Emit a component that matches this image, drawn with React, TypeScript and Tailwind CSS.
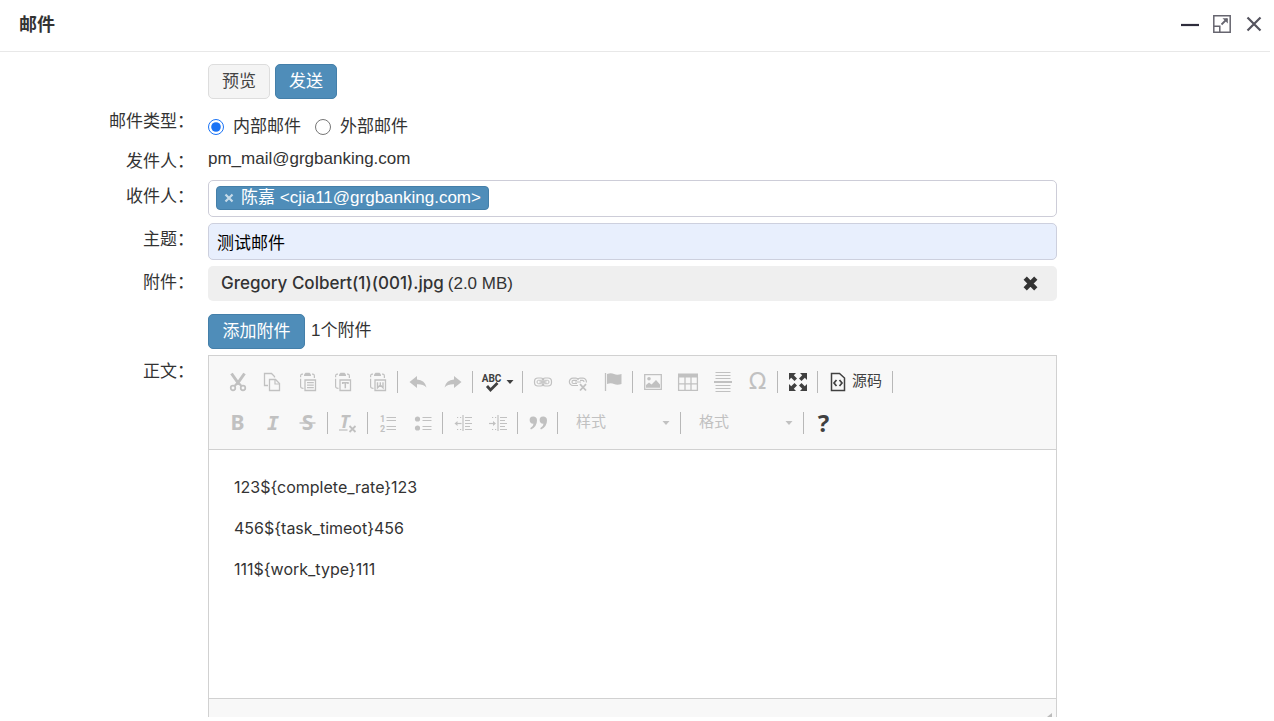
import { useState } from "react";
import type { ReactNode } from "react";

const Svg = ({ children, size = 20 }: { children: ReactNode; size?: number }) => (
  <svg
    width={size}
    height={size}
    viewBox="0 0 20 20"
    fill="none"
    stroke="currentColor"
    strokeWidth="1.5"
    className="overflow-visible"
    aria-hidden="true"
  >
    {children}
  </svg>
);

const Clipboard = ({ children }: { children: ReactNode }) => (
  <Svg>
    <path d="M5 2.2H4Q2.6 2.4 2.6 4V5.2M2.6 6.8V14.5Q2.6 16.3 5.5 16.3M14 2.2H15Q16.4 2.4 16.4 4V6" strokeWidth="1.2" />
    <path d="M6 4V2.5L7.5 0.8H11.5L13 2.5V4Z" fill="currentColor" stroke="none" />
    <path d="M7 8H17.5V18.5H7Z" strokeWidth="1.3" />
    {children}
  </Svg>
);

const CutIcon = () => (
  <Svg>
    <path d="M3.5 1.5L11.2 12.5M16.5 1.5L8.8 12.5" strokeWidth="3" />
    <circle cx="5" cy="16" r="2.3" strokeWidth="1.7" />
    <circle cx="15" cy="16" r="2.3" strokeWidth="1.7" />
    <path d="M6.5 14L10 10.5L13.5 14" strokeWidth="2.2" />
  </Svg>
);

const CopyIcon = () => (
  <Svg>
    <path d="M5 13.5H1.5V1.5H8.5L11.5 4.5V5.5" strokeWidth="1.3" />
    <path d="M6.5 7.5H12.5L16.5 11.5V18.5H6.5Z" strokeWidth="1.3" />
    <path d="M12 7.5V12H16.5" strokeWidth="1.2" />
  </Svg>
);

const PasteIcon = () => (
  <Clipboard>
    <path d="M9 10.7H15.8M9 13.2H15.8M9 15.7H15.8" strokeWidth="1.2" />
  </Clipboard>
);

const PasteTextIcon = () => (
  <Clipboard>
    <path d="M9.7 12V10.8H15V12M12.3 10.8V16.3" strokeWidth="1.5" />
  </Clipboard>
);

const PasteWordIcon = () => (
  <Clipboard>
    <path d="M9.5 10.2V15.8L12.3 13L15 15.8V10.2M12.3 10.2V13.5" strokeWidth="1.4" />
  </Clipboard>
);

const UndoIcon = () => (
  <Svg>
    <path d="M1.5 10L9 4V7.5Q17 8 18.5 15.5Q15 12 9 12.3V16Z" fill="currentColor" stroke="none" />
  </Svg>
);

const RedoIcon = () => (
  <Svg>
    <path d="M18.5 10L11 4V7.5Q3 8 1.5 15.5Q5 12 11 12.3V16Z" fill="currentColor" stroke="none" />
  </Svg>
);

const LinkIcon = () => (
  <Svg>
    <rect x="1.5" y="6" width="9.5" height="8" rx="3.5" strokeWidth="1.2" />
    <rect x="9" y="6" width="9.5" height="8" rx="3.5" strokeWidth="1.2" />
    <path d="M8.5 8.3H5.5Q4 8.3 4 10Q4 11.7 5.5 11.7H8.5M11.5 8.3H14.5Q16 8.3 16 10Q16 11.7 14.5 11.7H11.5" strokeWidth="1" />
    <path d="M6.5 10H13.5" strokeWidth="1.3" />
  </Svg>
);

const UnlinkIcon = () => (
  <Svg>
    <path d="M10 13.5H5A3.6 3.6 0 0 1 5 6.2H8Q10 6.2 10.3 8.2M9.7 8.2Q10 6.2 12 6.2H15A3.4 3.4 0 0 1 18.3 10.5M9 8.3H5.5Q4 8.3 4 10Q4 11.5 5.5 11.5H9M12 8.3H14.5Q16 8.3 16 10M7 10H13" strokeWidth="1.2" />
    <path d="M12 12.2L18 18.5M18 12.2L12 18.5" strokeWidth="1.8" />
  </Svg>
);

const FlagIcon = () => (
  <Svg>
    <path d="M2.5 1V19" strokeWidth="1.3" />
    <path d="M4 2Q8 0.5 11 2Q14 3.3 18.5 2V12Q14 13.5 11 12Q8 10.5 4 12Z" fill="currentColor" stroke="none" />
  </Svg>
);

const ImageIcon = () => (
  <Svg>
    <path d="M1.7 2.7H18.3V17.3H1.7Z" strokeWidth="1.3" />
    <circle cx="6" cy="6.8" r="1.8" fill="currentColor" stroke="none" />
    <path d="M3 15.8V13L6 10.5L8.5 12.5L13 8L17 12.5V15.8Z" fill="currentColor" stroke="none" />
  </Svg>
);

const TableIcon = () => (
  <Svg>
    <path d="M0 1.5H20V5.5H0Z" fill="currentColor" stroke="none" />
    <path d="M0.6 5V18.4H19.4V5M0 11.9H20M7 5V18M13 5V18" strokeWidth="1.3" />
  </Svg>
);

const RuleIcon = () => (
  <Svg>
    <path d="M2.5 0.5H17.5M2.5 3.5H17.5M2.5 6.5H17.5M2.5 13.5H17.5M2.5 16.5H17.5M2.5 19.5H17.5" strokeWidth="1" />
    <path d="M1 10H19" strokeWidth="2" />
  </Svg>
);

const MaximizeIcon = () => (
  <Svg>
    <path
      d="M1 1H8L5.8 3.2L9 6.5L6.5 9L3.2 5.8L1 8ZM19 1V8L16.8 5.8L13.5 9L11 6.5L14.2 3.2L12 1ZM1 19V12L3.2 14.2L6.5 11L9 13.5L5.8 16.8L8 19ZM19 19H12L14.2 16.8L11 13.5L13.5 11L16.8 14.2L19 12Z"
      fill="currentColor"
      stroke="none"
    />
  </Svg>
);

const SourceIcon = () => (
  <Svg>
    <path d="M3.5 1.5H11.5L16.5 6V18.5H3.5Z" strokeWidth="1.5" />
    <path d="M8.5 8L6 11L8.5 14M11.5 8L14 11L11.5 14" strokeWidth="1.7" />
  </Svg>
);

const BoldIcon = () => (
  <Svg>
    <text x="9.5" y="17" textAnchor="middle" fontSize="21" fontWeight="700" fontFamily="Noto Sans, sans-serif" fill="currentColor" stroke="none">
      B
    </text>
  </Svg>
);

const ItalicIcon = () => (
  <Svg>
    <text x="10" y="17" textAnchor="middle" fontSize="20" fontWeight="700" fontStyle="italic" fontFamily="DejaVu Sans Mono, monospace" fill="currentColor" stroke="none">
      I
    </text>
  </Svg>
);

const StrikeIcon = () => (
  <Svg>
    <text x="9.5" y="17" textAnchor="middle" fontSize="21" fontWeight="700" fontFamily="Noto Sans, sans-serif" fill="currentColor" stroke="none">
      S
    </text>
    <path d="M1.5 10H17.5" strokeWidth="1.4" />
  </Svg>
);

const ClearFormatIcon = () => (
  <Svg>
    <text x="2" y="15" fontSize="18" fontWeight="700" fontStyle="italic" fontFamily="Noto Sans, sans-serif" fill="currentColor" stroke="none">
      T
    </text>
    <path d="M1 17H9.5" strokeWidth="1.3" />
    <path d="M11.5 13L17.5 19M17.5 13L11.5 19" strokeWidth="1.8" />
  </Svg>
);

const NumberListIcon = () => (
  <Svg>
    <text x="2" y="8.5" fontSize="9" fontWeight="700" fontFamily="Roboto, sans-serif" fill="currentColor" stroke="none">
      1
    </text>
    <text x="2" y="18.5" fontSize="9" fontWeight="700" fontFamily="Roboto, sans-serif" fill="currentColor" stroke="none">
      2
    </text>
    <path d="M8.5 4.5H18M8.5 7.5H18M8.5 13.5H18M8.5 16.5H18" strokeWidth="1.1" />
  </Svg>
);

const BulletListIcon = () => (
  <Svg>
    <circle cx="4.5" cy="6" r="2.6" fill="currentColor" stroke="none" />
    <circle cx="4.5" cy="15" r="2.6" fill="currentColor" stroke="none" />
    <path d="M9.5 4.5H18.5M9.5 7.5H18.5M9.5 13.5H18.5M9.5 16.5H18.5" strokeWidth="1.1" />
  </Svg>
);

const IndentLines = () => (
  <>
    <path d="M10 2V18" strokeWidth="1.2" />
    <path d="M12 4.5H19M12 7.5H17M12 10.5H19M12 13.5H17M12 16.5H19" strokeWidth="1.1" />
    <path d="M4 4.5H5.2M7 4.5H8.2M4 16.5H5.2M7 16.5H8.2" strokeWidth="1.1" />
  </>
);

const OutdentIcon = () => (
  <Svg>
    <IndentLines />
    <path d="M3 10.5H8.5" strokeWidth="1.2" />
    <path d="M1.5 10.5L4.5 8V13Z" fill="currentColor" stroke="none" />
  </Svg>
);

const IndentIcon = () => (
  <Svg>
    <IndentLines />
    <path d="M1 10.5H5.5" strokeWidth="1.2" />
    <path d="M8 10.5L5 8V13Z" fill="currentColor" stroke="none" />
  </Svg>
);

const QuoteIcon = () => (
  <Svg>
    <path
      d="M5 3.5A3.7 3.7 0 0 1 9 7.5Q9 13.5 3 16.5L2.2 15.3Q5.5 13 5.5 10.7A3.6 3.6 0 1 1 5 3.5ZM15 3.5A3.7 3.7 0 0 1 19 7.5Q19 13.5 13 16.5L12.2 15.3Q15.5 13 15.5 10.7A3.6 3.6 0 1 1 15 3.5Z"
      fill="currentColor"
      stroke="none"
    />
  </Svg>
);

const SpellIcon = () => (
  <Svg>
    <text x="9.5" y="10" textAnchor="middle" fontSize="10" fontWeight="700" fontFamily="Roboto, sans-serif" fill="currentColor" stroke="none">
      ABC
    </text>
    <path d="M5 14L8.5 18L15.5 11" strokeWidth="2.8" />
  </Svg>
);

const Caret = () => (
  <svg width="8" height="4" viewBox="0 0 8 4" fill="currentColor" aria-hidden="true">
    <path d="M0.5 0H7.5L4 4Z" />
  </svg>
);

const Tool = ({ label, dark, children }: { label: string; dark?: boolean; children: ReactNode }) => (
  <button
    type="button"
    aria-label={label}
    title={label}
    className={`flex h-[41px] w-[35px] items-center justify-center ${dark ? "text-[#404040]" : "text-[#c1c1c1]"}`}
  >
    {children}
  </button>
);

const Separator = () => <span className="mx-[2px] h-[22px] w-px bg-[#b8b8b8]" />;

const ToolSelect = ({ label }: { label: string }) => (
  <div className="relative flex w-[118px] items-center text-[#c1c1c1]">
    <select
      aria-label={label}
      className="h-8 w-full appearance-none bg-transparent pl-4 text-[15px] outline-none"
    >
      <option>{label}</option>
    </select>
    <span className="pointer-events-none absolute right-2">
      <Caret />
    </span>
  </div>
);

const Toolbar = () => (
  <div className="border-b border-[#d1d1d1] bg-[#f8f8f8] px-[11px] pt-[5px] pb-[6px]">
    <div className="flex flex-wrap items-center">
      <Tool label="剪切"><CutIcon /></Tool>
      <Tool label="复制"><CopyIcon /></Tool>
      <Tool label="粘贴"><PasteIcon /></Tool>
      <Tool label="粘贴为无格式文本"><PasteTextIcon /></Tool>
      <Tool label="从 MS Word 粘贴"><PasteWordIcon /></Tool>
      <Separator />
      <Tool label="撤消"><UndoIcon /></Tool>
      <Tool label="重做"><RedoIcon /></Tool>
      <Separator />
      <button
        type="button"
        aria-label="拼写检查"
        className="flex h-[41px] w-[45px] items-center justify-center gap-1 text-[#404040]"
      >
        <SpellIcon />
        <Caret />
      </button>
      <Separator />
      <Tool label="插入链接"><LinkIcon /></Tool>
      <Tool label="取消链接"><UnlinkIcon /></Tool>
      <Tool label="锚点"><FlagIcon /></Tool>
      <Separator />
      <Tool label="图像"><ImageIcon /></Tool>
      <Tool label="表格"><TableIcon /></Tool>
      <Tool label="水平线"><RuleIcon /></Tool>
      <Tool label="特殊字符">
        <span className="font-['DejaVu_Sans'] text-[23px]">Ω</span>
      </Tool>
      <Separator />
      <Tool label="全屏" dark><MaximizeIcon /></Tool>
      <Separator />
      <button
        type="button"
        className="flex h-[41px] w-[70px] items-center gap-1 pl-2 text-[15px] text-[#404040]"
      >
        <SourceIcon />
        源码
      </button>
      <Separator />
    </div>
    <div className="flex flex-wrap items-center">
      <Tool label="加粗"><BoldIcon /></Tool>
      <Tool label="倾斜"><ItalicIcon /></Tool>
      <Tool label="删除线"><StrikeIcon /></Tool>
      <Separator />
      <Tool label="清除格式"><ClearFormatIcon /></Tool>
      <Separator />
      <Tool label="编号列表"><NumberListIcon /></Tool>
      <Tool label="项目列表"><BulletListIcon /></Tool>
      <Separator />
      <Tool label="减少缩进量"><OutdentIcon /></Tool>
      <Tool label="增加缩进量"><IndentIcon /></Tool>
      <Separator />
      <Tool label="块引用"><QuoteIcon /></Tool>
      <Separator />
      <ToolSelect label="样式" />
      <Separator />
      <ToolSelect label="格式" />
      <Separator />
      <Tool label="关于" dark>
        <span className="font-['Noto_Sans'] text-2xl font-bold">?</span>
      </Tool>
    </div>
  </div>
);

const Row = ({ label, htmlFor, children }: { label?: string; htmlFor?: string; children: ReactNode }) => (
  <div className="flex items-start gap-[14px]">
    <div className="w-[194px] shrink-0 text-right leading-[34px]">
      {label && <label htmlFor={htmlFor}>{label}：</label>}
    </div>
    <div className="w-2/3">{children}</div>
  </div>
);

export default function App() {
  const [mailType, setMailType] = useState("inner");
  const [subject, setSubject] = useState("测试邮件");

  return (
    <div className="bg-white font-['Liberation_Sans','Noto_Sans_CJK_SC',sans-serif] text-[17px] text-[#333]">
      <header className="mr-1 flex h-[52px] items-center justify-between border-b border-[#e8e8e8] pr-[6px] pb-1 pl-[19px]">
        <h1 className="pt-[2px] text-lg font-bold">邮件</h1>
        <div className="flex items-center gap-3 text-[#2e2d3c]">
          <button type="button" aria-label="最小化">
            <Svg><path d="M1 11H19" strokeWidth="2.2" /></Svg>
          </button>
          <button type="button" aria-label="最大化" className="text-[#66656f]">
            <Svg>
              <path d="M1.8 1.8H18.2V18.2H1.8Z" />
              <path d="M1.8 12.2H7.8V18.2" />
              <path d="M9.5 10.5L15 5" strokeWidth="1.8" />
              <path d="M10.5 4.2H15.8V9.5Z" fill="currentColor" stroke="none" />
            </Svg>
          </button>
          <button type="button" aria-label="关闭" className="text-[#55545f]">
            <Svg><path d="M3.5 3.5L16.5 16.5M16.5 3.5L3.5 16.5" strokeWidth="2.2" /></Svg>
          </button>
        </div>
      </header>

      <form className="pt-3" onSubmit={(e) => e.preventDefault()}>
        <Row>
          <div className="mb-[6px] flex gap-[5px]">
            <button type="button" className="h-[35px] w-[62px] rounded-[5px] border border-[#ddd] bg-[#f4f4f4] text-[#444]">
              预览
            </button>
            <button type="submit" className="h-[35px] w-[62px] rounded-[5px] border border-[#447fa9] bg-[#4f8db9] text-white">
              发送
            </button>
          </div>
        </Row>

        <Row label="邮件类型">
          <div className="flex h-10 items-center gap-[14px] pt-1">
            <label className="flex items-center gap-[9px]">
              <input
                type="radio"
                name="mailType"
                className="size-4 accent-[#1a73f5]"
                checked={mailType === "inner"}
                onChange={() => setMailType("inner")}
              />
              内部邮件
            </label>
            <label className="flex items-center gap-[9px]">
              <input
                type="radio"
                name="mailType"
                className="size-4"
                checked={mailType === "outer"}
                onChange={() => setMailType("outer")}
              />
              外部邮件
            </label>
          </div>
        </Row>

        <Row label="发件人">
          <div className="h-[35px] leading-[28px]">pm_mail@grgbanking.com</div>
        </Row>

        <Row label="收件人" htmlFor="receiver">
          <div className="mb-[6px] flex h-[37px] items-start rounded-[5px] border border-[#cdcdd8] px-[7px] pt-[5px]">
            <span className="flex h-6 items-center gap-[7px] rounded border border-[#447fa9] bg-[#4f8db9] px-[7px] text-white">
              <button type="button" aria-label="移除" className="text-[#c6dbe9]">
                <svg width="10" height="10" viewBox="0 0 10 10" stroke="currentColor" strokeWidth="2.2">
                  <path d="M1.5 1.5L8.5 8.5M8.5 1.5L1.5 8.5" />
                </svg>
              </button>
              陈嘉 &lt;cjia11@grgbanking.com&gt;
            </span>
            <input id="receiver" type="text" className="h-6 min-w-0 flex-1 px-1 outline-none" />
          </div>
        </Row>

        <Row label="主题" htmlFor="subject">
          <input
            id="subject"
            type="text"
            value={subject}
            onChange={(e) => setSubject(e.target.value)}
            className="mb-[6px] block h-[37px] w-full rounded-[5px] border border-[#cdd0de] bg-[#e8effd] px-2 text-black outline-none"
          />
        </Row>

        <Row label="附件" htmlFor="attachment">
          <div className="mb-[13px] flex h-[35px] items-center rounded-[5px] bg-[#efefef] pr-[19px] pl-[13px]">
            <span className="font-['Inter'] font-medium">Gregory Colbert(1)(001).jpg</span>
            <span className="ml-1 flex-1">(2.0 MB)</span>
            <button type="button" aria-label="删除附件">
              <svg width="15" height="15" viewBox="0 0 15 15" stroke="currentColor" strokeWidth="4.6">
                <path d="M2.2 2.2L12.8 12.8M12.8 2.2L2.2 12.8" />
              </svg>
            </button>
          </div>
        </Row>

        <Row>
          <div className="mb-[6px] flex gap-[6px]">
            <button id="attachment" type="button" className="h-[35px] w-[97px] rounded-[5px] border border-[#447fa9] bg-[#4f8db9] text-white">
              添加附件
            </button>
            <span className="leading-[34px]">1个附件</span>
          </div>
        </Row>

        <Row label="正文">
          <div className="border border-b-0 border-[#d1d1d1]">
            <Toolbar />
            <div
              role="textbox"
              aria-label="正文"
              contentEditable
              suppressContentEditableWarning
              className="h-[248px] px-[25px] pt-[17px] font-['Inter','Noto_Sans_CJK_SC',sans-serif] text-base leading-[41px] outline-none"
            >
              <p>{"123${complete_rate}123"}</p>
              <p>{"456${task_timeot}456"}</p>
              <p>{"111${work_type}111"}</p>
            </div>
            <div className="flex h-[19px] items-end justify-end border-t border-[#d1d1d1] bg-[#f8f8f8] pr-1">
              <svg width="5" height="4" viewBox="0 0 5 4" fill="#bbb" aria-hidden="true">
                <path d="M5 0V4H0Z" />
              </svg>
            </div>
          </div>
        </Row>
      </form>
    </div>
  );
}
